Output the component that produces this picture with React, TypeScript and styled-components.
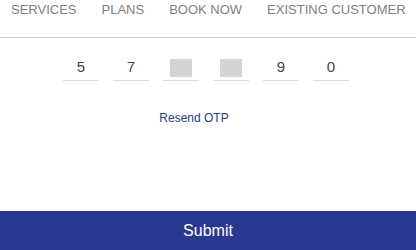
import React from "react";
import styled, { createGlobalStyle } from "styled-components";

const Global = createGlobalStyle`
  html, body { margin: 0; padding: 0; background: #fff; }
  body { font-family: "Liberation Sans", Arial, sans-serif; }
  * { box-sizing: border-box; }
`;

const Page = styled.div`
  height: 250px;
  display: flex;
  flex-direction: column;
  overflow: hidden;
`;

const Nav = styled.nav`
  display: flex;
  gap: 25px;
  padding: 2px 0 0 11px;
  height: 38px;
  border-bottom: 1px solid #cfcfcf;
  white-space: nowrap;
`;

const NavItem = styled.span`
  font-size: 13px;
  line-height: 16px;
  color: #808080;
`;

const Content = styled.div`
  flex: 1;
  display: flex;
  flex-direction: column;
  align-items: center;
  padding-top: 17px;
`;

const OtpRow = styled.div`
  display: flex;
  gap: 14px;
  margin-right: 4px;
`;

const Cell = styled.div`
  width: 36px;
  height: 26px;
  border-bottom: 1px solid #dcdcdc;
  display: flex;
  align-items: center;
  justify-content: center;
  font-size: 15px;
  color: #444;
  padding-bottom: 2px;
`;

const Mask = styled.div`
  width: 22px;
  height: 18px;
  background: #d4d4d4;
  margin-top: 2px;
`;

const Resend = styled.a`
  margin-top: 30px;
  font-size: 12px;
  color: #2c3c7c;
  text-decoration: none;
  margin-right: 28px;
`;

const Submit = styled.button`
  height: 39px;
  border: none;
  background: #2b388f;
  color: #fff;
  font-family: "Liberation Sans", Arial, sans-serif;
  font-size: 16px;
  padding: 0;
  flex-shrink: 0;
`;

const digits: (string | null)[] = ["5", "7", null, null, "9", "0"];

export default function App() {
  return (
    <Page>
      <Global />
      <Nav>
        <NavItem>SERVICES</NavItem>
        <NavItem>PLANS</NavItem>
        <NavItem>BOOK NOW</NavItem>
        <NavItem>EXISTING CUSTOMER</NavItem>
      </Nav>
      <Content>
        <OtpRow>
          {digits.map((d, i) => (
            <Cell key={i}>{d === null ? <Mask /> : d}</Cell>
          ))}
        </OtpRow>
        <Resend href="#">Resend OTP</Resend>
      </Content>
      <Submit>Submit</Submit>
    </Page>
  );
}
